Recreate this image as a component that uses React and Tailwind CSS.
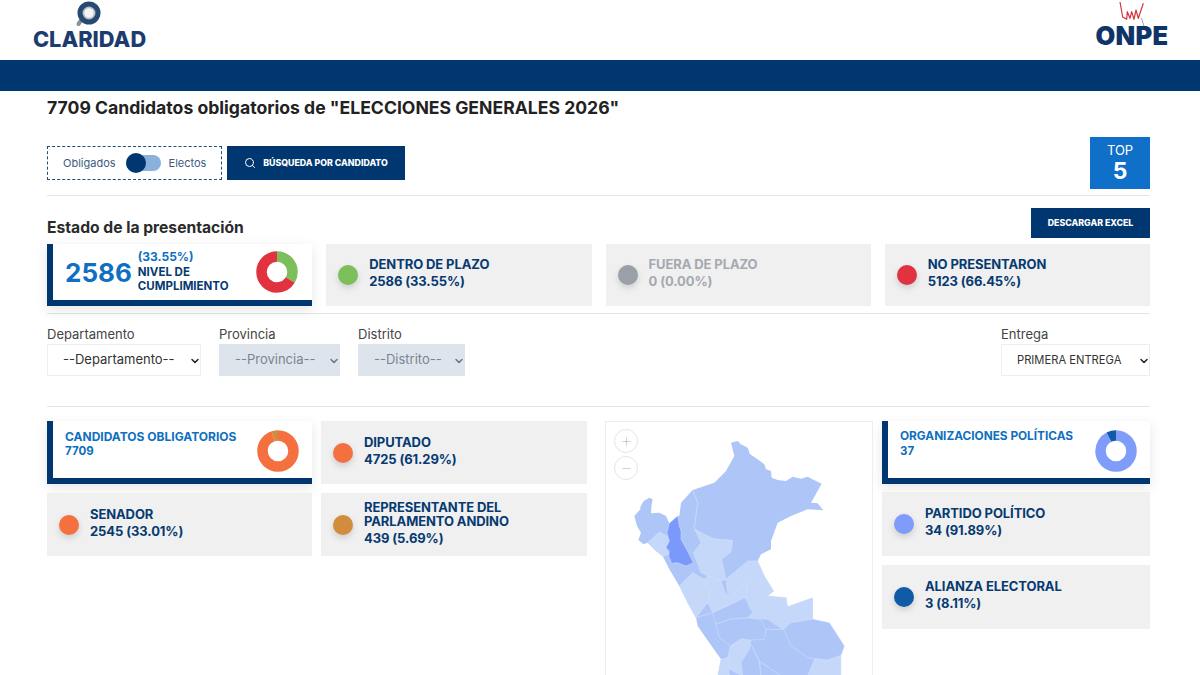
import React from "react";
import { Search, Plus, Minus, ChevronDown } from "lucide-react";

// Doughnut chart, segments start at 12 o'clock
const Donut = ({ segments }) => {
  const r = 15.5;
  const c = 2 * Math.PI * r;
  let offset = 0;
  return (
    <svg width="42" height="42" viewBox="0 0 42 42" className="shrink-0">
      {segments.map((s, i) => {
        const len = (s.pct / 100) * c;
        const el = (
          <circle
            key={i}
            cx="21"
            cy="21"
            r={r}
            fill="none"
            stroke={s.color}
            strokeWidth="10.5"
            strokeDasharray={`${len} ${c - len}`}
            strokeDashoffset={-offset}
            transform="rotate(-90 21 21)"
          />
        );
        offset += len;
        return el;
      })}
    </svg>
  );
};

const StatCard = ({ color, title, value, faded, className }) => (
  <div className={`flex items-center bg-[#f0f0f0] pl-3 pr-2 ${className}`}>
    <span
      className="w-5 h-5 rounded-full shrink-0 shadow-[0_3px_6px_rgba(0,0,0,0.15)]"
      style={{ backgroundColor: color }}
    />
    <div className={`ml-[11px] -mt-[5px] font-bold text-[13px] tracking-[-0.1px] ${faded ? "text-[#a4a9b1]" : "text-[#063a70]"}`}>
      <div className="leading-[14px]">{title}</div>
      <div className="mt-[3px] leading-[14px]">{value}</div>
    </div>
  </div>
);

const DonutCard = ({ title, value, segments, titleSize, className }) => (
  <div className={`flex justify-between border-l-[6px] border-b-[6px] border-[#003770] bg-white pl-3 pr-[13px] pt-[9px] shadow-[0_4px_12px_rgba(0,0,0,0.1)] ${className}`}>
    <div className={`-mt-[1px] font-bold leading-[15px] text-[#0f6fc0] ${titleSize}`}>
      <div>{title}</div>
      <div className="text-[11.5px]">{value}</div>
    </div>
    <Donut segments={segments} />
  </div>
);

const Field = ({ label, width, disabled, option, small }) => (
  <div style={{ width }}>
    <label className="block mb-[2px] text-[13px] leading-[16px] text-[#444]">{label}</label>
    <div className="relative">
      <select
        disabled={disabled}
        className={`block w-full h-8 pl-[15px] appearance-none border ${small ? "text-[11.2px]" : "text-[13px]"} ${disabled ? "bg-[#dde4ec] border-[#dde4ec] text-[#7b8490]" : "bg-white border-[#eeeeee] text-[#333]"}`}
      >
        <option>{option}</option>
      </select>
      <ChevronDown
        size={12}
        strokeWidth={3}
        className={`absolute right-0 top-[11px] ${disabled ? "text-[#6b7580]" : "text-[#222]"}`}
      />
    </div>
  </div>
);

const ClaridadLogo = () => (
  <div className="flex flex-col items-center w-[113px] pt-[1px]">
    <svg width="30" height="26" viewBox="0 0 30 26">
      <path d="M7 18 L3.5 23" stroke="#8a8f98" strokeWidth="4" strokeLinecap="round" />
      <circle cx="14" cy="12" r="9" fill="#b9bec6" stroke="#264a73" strokeWidth="5" />
      <circle cx="14" cy="12" r="4.8" fill="#f4f4f4" />
    </svg>
    <div className="mt-[1px] text-[21.8px] font-extrabold leading-[22px] text-[#1d3c6e]">CLARIDAD</div>
  </div>
);

const OnpeLogo = () => (
  <div className="flex flex-col items-center w-[72px] pt-[1px]">
    <svg width="30" height="27" viewBox="0 0 30 27" fill="none">
      <path d="M24.5 17 L27.5 27" stroke="#9aa3ad" strokeWidth="1" />
      <path d="M3 1 L5.7 16 L9.7 18.3 L10.3 10.7 L13 17.3 L14.7 10.7 L17 18.3 L19 9 L21.3 17.3 L23 12.3 L26.3 2.3" stroke="#d2343f" strokeWidth="1.2" strokeLinejoin="round" />
    </svg>
    <div className="-mt-[2px] text-[25.5px] font-black leading-[20px] tracking-[0.3px] text-[#0f3468]">ONPE</div>
  </div>
);

const LIGHT = "#c5d8f9";
const MID = "#adc6f7";

// Outer border of Peru, sits under the departments
const OUTLINE = "118,272 128,255 145,245 155,250 152,265 150,292 175,290 195,300 205,322 230,300 235,300 240,260 275,222 340,200 375,165 400,120 395,100 390,80 410,75 420,85 440,95 447,115 470,130 490,145 495,160 510,165 512,185 530,192 555,195 575,182 600,188 620,182 645,195 662,203 630,260 650,262 667,283 620,280 570,300 530,320 510,375 510,400 480,415 470,435 490,480 518,525 500,540 555,545 560,572 635,545 635,610 685,620 730,690 720,718 720,780 350,780 360,730 325,680 290,630 285,605 260,560 235,510 205,460 185,420 165,405 140,380 128,385 112,372 120,350 108,330 100,300 118,280";

// Peru departments, traced in the panel's coordinates
const REGIONS = [
  { c: LIGHT, p: "140,380 175,348 198,360 205,375 195,395 205,415 185,420 165,405" },
  { c: LIGHT, p: "280,338 310,355 340,368 395,373 390,408 362,430 375,490 360,495 320,480 300,470 277,410 300,380" },
  { c: LIGHT, p: "235,510 275,470 310,490 330,525 320,560 285,605 260,560" },
  { c: LIGHT, p: "310,490 320,480 360,495 372,530 380,540 400,530 440,500 435,545 380,570 335,590 320,560 330,525" },
  { c: LIGHT, p: "375,490 440,435 470,435 490,480 518,525 500,540 555,545 560,572 635,545 635,610 570,620 545,640 500,610 440,605 455,590 435,545 440,500 400,530 380,535" },
  { c: LIGHT, p: "388,690 420,668 450,672 445,700 420,740 425,780 385,760 380,725" },
  { c: LIGHT, p: "360,730 380,725 385,780 350,780" },
  { c: LIGHT, p: "620,780 640,730 680,732 720,718 720,780" },
  { c: MID, p: "335,590 380,570 430,545 455,590 440,605 385,610 345,625" },
  { c: MID, p: "345,625 385,610 440,605 480,612 495,640 490,670 450,672 420,668 388,690 355,665" },
  { c: MID, p: "548,640 570,620 635,610 685,620 730,690 720,718 680,732 620,725 570,690" },
  { c: "#7a99fb", p: "205,322 230,300 235,330 240,345 240,370 262,410 277,440 255,450 230,440 212,442 203,420 205,405 195,395 205,375 198,350" },
];

const PeruMap = () => (
  <div className="relative w-[268px] h-[254px] shrink-0 border border-[#eeeeee] border-b-0 overflow-hidden">
    <svg width="268" height="254" viewBox="15 18 804 762" className="block">
      <polygon points={OUTLINE} fill={MID} />
      {/* thin lines of the departments that keep the base colour */}
      <path d="M275,222 L290,260 L280,335 M475,735 L540,780 M450,685 L475,735 L480,780 M490,640 L545,640 M285,605 L335,590" fill="none" stroke="#d5e1fb" strokeWidth="2" />
      {REGIONS.map((r, i) => (
        <polygon key={i} points={r.p} fill={r.c} stroke="#d5e1fb" strokeWidth="1.5" strokeLinejoin="round" />
      ))}
    </svg>
    <div className="absolute left-2 top-[7px] flex flex-col gap-[3px]">
      <button className="w-6 h-6 rounded-full border border-[#e5e5e5] bg-white flex items-center justify-center text-[#aaa]"><Plus size={13} strokeWidth={1} /></button>
      <button className="w-6 h-6 rounded-full border border-[#e5e5e5] bg-white flex items-center justify-center text-[#aaa]"><Minus size={13} strokeWidth={1} /></button>
    </div>
  </div>
);

export default function App() {
  return (
    <div className="h-[675px] overflow-hidden bg-white" style={{ fontFamily: "Inter, 'Noto Sans', sans-serif" }}>
      <header className="h-[60px] flex justify-between pl-[33px] pr-[32px]">
        <ClaridadLogo />
        <OnpeLogo />
      </header>
      <div className="h-[31px] bg-[#003770]" />

      <main className="pl-[47px] pr-[50px]">
        <h1 className="mt-[3px] text-[17.6px] leading-[27px] font-bold text-[#222]">
          7709 Candidatos obligatorios de "ELECCIONES GENERALES 2026"
        </h1>

        <div className="mt-4 flex justify-between items-start">
          <div className="mt-[9px] flex gap-[5px]">
            <div className="w-[175px] h-[34px] border border-dashed border-[#1d4f85] flex items-center pl-[15px] text-[11px] text-[#3d5c80]">
              <span>Obligados</span>
              <span className="relative ml-[10px] w-[35px] h-4 rounded-full bg-[#8ab0dc]">
                <span className="absolute left-0 -top-[2px] w-5 h-5 rounded-full bg-[#003770]" />
              </span>
              <span className="ml-2">Electos</span>
            </div>
            <button className="w-[178px] h-[34px] bg-[#003770] text-white flex items-center justify-center gap-[7px] text-[8.8px] font-extrabold">
              <Search size={12} />
              BÚSQUEDA POR CANDIDATO
            </button>
          </div>
          <div className="w-[60px] h-[52px] bg-[#0f6fc9] text-white flex flex-col items-center justify-center">
            <div className="text-[13px] leading-[16px]">TOP</div>
            <div className="text-[23px] leading-[26px] font-bold">5</div>
          </div>
        </div>

        <hr className="mt-[6px] border-[#e5e5e5]" />

        <div className="mt-3 flex justify-between items-end">
          <h2 className="text-[15.65px] leading-[20px] font-bold text-[#2b2b2b]">Estado de la presentación</h2>
          <button className="w-[119px] h-[30px] bg-[#003770] text-white text-[8.8px] font-extrabold">DESCARGAR EXCEL</button>
        </div>

        <div className="mt-[6px] grid grid-cols-4 gap-[14px]">
          <div className="h-[62px] flex items-center border-l-[6px] border-b-[6px] border-[#003770] bg-white pl-3 pr-[14px] shadow-[0_4px_12px_rgba(0,0,0,0.1)]">
            <div className="text-[26px] font-bold text-[#0f6fc0]">2586</div>
            <div className="ml-[6px] flex-1 text-[11.5px] font-bold leading-[14.5px] text-[#063a70]">
              <div className="text-[12px] text-[#0f6fc0]">(33.55%)</div>
              <div>NIVEL DE</div>
              <div>CUMPLIMIENTO</div>
            </div>
            <Donut segments={[{ pct: 33.55, color: "#7cbf5a" }, { pct: 66.45, color: "#e0323f" }]} />
          </div>
          <StatCard className="h-[62px]" color="#7cbf5a" title="DENTRO DE PLAZO" value="2586 (33.55%)" />
          <StatCard className="h-[62px]" color="#9a9fa8" title="FUERA DE PLAZO" value="0 (0.00%)" faded />
          <StatCard className="h-[62px]" color="#e0323f" title="NO PRESENTARON" value="5123 (66.45%)" />
        </div>

        <hr className="mt-[7px] border-[#e5e5e5]" />

        <div className="mt-[12px] flex">
          <Field label="Departamento" width={154} option="--Departamento--" />
          <div className="w-[18px]" />
          <Field label="Provincia" width={121} option="--Provincia--" disabled />
          <div className="w-[18px]" />
          <Field label="Distrito" width={107} option="--Distrito--" disabled />
          <div className="flex-1" />
          <Field label="Entrega" width={149} option="PRIMERA ENTREGA" small />
        </div>

        <hr className="mt-[30px] border-[#e5e5e5]" />

        <div className="mt-[14px] flex">
          <div className="w-[265px] shrink-0 flex flex-col gap-[9px]">
            <DonutCard className="h-[63px]" titleSize="text-[12px]" title="CANDIDATOS OBLIGATORIOS" value="7709" segments={[{ pct: 94.31, color: "#f4703e" }, { pct: 5.69, color: "#d28c3e" }]} />
            <StatCard className="h-[63px]" color="#f4703e" title="SENADOR" value="2545 (33.01%)" />
          </div>
          <div className="ml-[9px] w-[266px] shrink-0 flex flex-col gap-[9px]">
            <StatCard className="h-[63px]" color="#f4703e" title="DIPUTADO" value="4725 (61.29%)" />
            <StatCard className="h-[63px]" color="#d28c3e" title={<>REPRESENTANTE DEL<br />PARLAMENTO ANDINO</>} value="439 (5.69%)" />
          </div>
          <div className="ml-[18px]"><PeruMap /></div>
          <div className="ml-[9px] flex-1 flex flex-col gap-[8px]">
            <DonutCard className="h-[63px]" titleSize="text-[11.8px]" title="ORGANIZACIONES POLÍTICAS" value="37" segments={[{ pct: 91.89, color: "#7f9cfb" }, { pct: 8.11, color: "#0f5ba7" }]} />
            <StatCard className="h-[64px]" color="#7f9cfb" title="PARTIDO POLÍTICO" value="34 (91.89%)" />
            <StatCard className="h-[64px] mt-[1px]" color="#0f5ba7" title="ALIANZA ELECTORAL" value="3 (8.11%)" />
          </div>
        </div>
      </main>
    </div>
  );
}
